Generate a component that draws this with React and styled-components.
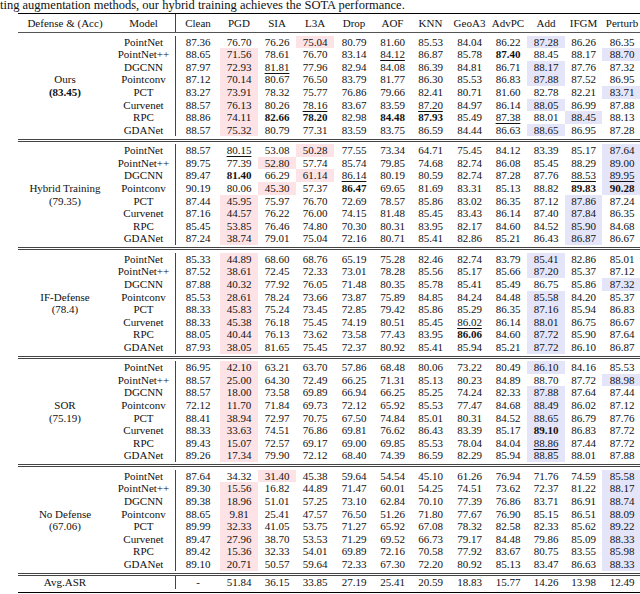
import React from 'react';
import styled, { createGlobalStyle } from 'styled-components';

const GlobalStyle = createGlobalStyle`
  html, body {
    margin: 0;
    padding: 0;
    background: #fff;
  }
  body {
    width: 640px;
    height: 594px;
    overflow: hidden;
    font-family: "Liberation Serif", "Times New Roman", serif;
    color: #111;
  }
`;

const Page = styled.div`
  width: 640px;
  height: 594px;
  overflow: hidden;
`;

const Caption = styled.p`
  margin: 0;
  height: 13.3px;
  font-size: 12.5px;
  line-height: 11.5px;
  white-space: nowrap;
`;

const Table = styled.table`
  margin-left: 18px;
  width: 624px;
  table-layout: fixed;
  border-collapse: separate;
  border-spacing: 0;
  font-size: 11px;
  border-top: 1.5px solid #000;
  border-bottom: 1.5px solid #000;
`;

const Col = styled.col`
  width: ${p => p.$w}px;
`;

const HeadCell = styled.th`
  padding: 0;
  font-weight: 400;
  text-align: center;
  border-bottom: 1px solid #555;
`;

const HeadVal = styled.div`
  line-height: 18px;
  height: 18px;
  white-space: nowrap;
  border-right: ${p => (p.$divider ? '1px solid #444' : 'none')};
`;

const Cell = styled.td`
  padding: ${p => p.$top || 0}px 0 ${p => p.$bottom || 0}px;
  text-align: center;
  vertical-align: middle;
  border-top: ${p => (p.$rule ? '3px double #444' : 'none')};
  white-space: nowrap;
`;

const TONES = {
  low: '#fde3e6',
  high: '#e5e5fa',
};

const Val = styled.div`
  height: 12.6px;
  line-height: 12.6px;
  background: ${p => TONES[p.$tone] || 'transparent'};
  font-weight: ${p => (p.$bold ? 700 : 400)};
  border-right: ${p => (p.$divider ? '1px solid #444' : 'none')};
`;

const Under = styled.span`
  text-decoration: underline;
  text-decoration-thickness: 1px;
  text-underline-offset: 1.5px;
`;

const LabelLine = styled.div`
  line-height: 12.6px;
  font-weight: ${p => (p.$bold ? 700 : 400)};
`;

const COLUMNS = ['Clean', 'PGD', 'SIA', 'L3A', 'Drop', 'AOF', 'KNN', 'GeoA3', 'AdvPC', 'Add', 'IFGM', 'Perturb'];
const WIDTHS = [94, 64, 44, 38, 38, 38, 40, 37, 39, 39, 38, 38, 37, 40];

// '*' = bold, '_' = underlined
const SECTIONS = [
  {
    label: 'Ours', acc: '(83.45)', strong: true, rows: [
      ['PointNet', '87.36 76.70 76.26 75.04 80.79 81.60 85.53 84.04 86.22 87.28 86.26 86.35'],
      ['PointNet++', '88.65 71.56 78.61 76.70 83.14 _84.12 86.87 85.78 *87.40 88.45 88.17 88.70'],
      ['DGCNN', '87.97 72.93 _81.81 77.96 82.94 84.08 86.39 84.81 86.71 88.17 87.76 87.32'],
      ['Pointconv', '87.12 70.14 80.67 76.50 83.79 81.77 86.30 85.53 86.83 87.88 87.52 86.95'],
      ['PCT', '83.27 73.91 78.32 75.77 76.86 79.66 82.41 80.71 81.60 82.78 82.21 83.71'],
      ['Curvenet', '88.57 76.13 80.26 _78.16 83.67 83.59 _87.20 84.97 86.14 88.05 86.99 87.88'],
      ['RPC', '88.86 74.11 *82.66 *78.20 82.98 *84.48 *87.93 85.49 _87.38 88.01 88.45 88.13'],
      ['GDANet', '88.57 75.32 80.79 77.31 83.59 83.75 86.59 84.44 86.63 88.65 86.95 87.28'],
    ],
  },
  {
    label: 'Hybrid Training', acc: '(79.35)', rows: [
      ['PointNet', '88.57 _80.15 53.08 50.28 77.55 73.34 64.71 75.45 84.12 83.39 85.17 87.64'],
      ['PointNet++', '89.75 77.39 52.80 57.74 85.74 79.85 74.68 82.74 86.08 85.45 88.29 89.00'],
      ['DGCNN', '89.47 *81.40 66.29 61.14 _86.14 80.19 80.59 82.74 87.28 87.76 _88.53 _89.95'],
      ['Pointconv', '90.19 80.06 45.30 57.37 *86.47 69.65 81.69 83.31 85.13 88.82 *89.83 *90.28'],
      ['PCT', '87.44 45.95 75.97 76.70 72.69 78.57 85.86 83.02 86.35 87.12 87.86 87.24'],
      ['Curvenet', '87.16 44.57 76.22 76.00 74.15 81.48 85.45 83.43 86.14 87.40 87.84 86.35'],
      ['RPC', '85.45 53.85 76.46 74.80 70.30 80.31 83.95 82.17 84.60 84.52 85.90 84.68'],
      ['GDANet', '87.24 38.74 79.01 75.04 72.16 80.71 85.41 82.86 85.21 86.43 86.87 86.67'],
    ],
  },
  {
    label: 'IF-Defense', acc: '(78.4)', rows: [
      ['PointNet', '85.33 44.89 68.60 68.76 65.19 75.28 82.46 82.74 83.79 85.41 82.86 85.01'],
      ['PointNet++', '87.52 38.61 72.45 72.33 73.01 78.28 85.56 85.17 85.66 87.20 85.37 87.12'],
      ['DGCNN', '87.88 40.32 77.92 76.05 71.48 80.35 85.78 85.41 85.49 86.75 85.86 87.32'],
      ['Pointconv', '85.53 28.61 78.24 73.66 73.87 75.89 84.85 84.24 84.48 85.58 84.20 85.37'],
      ['PCT', '88.33 45.83 75.24 73.45 72.85 79.42 85.86 85.29 86.35 87.16 85.94 86.83'],
      ['Curvenet', '88.33 45.38 76.18 75.45 74.19 80.51 85.45 _86.02 86.14 88.01 86.75 86.67'],
      ['RPC', '88.05 40.44 76.13 73.62 73.58 77.43 83.95 *86.06 84.60 87.72 85.90 87.64'],
      ['GDANet', '87.93 38.05 81.65 75.45 72.37 80.92 85.41 85.94 85.21 87.72 86.10 86.87'],
    ],
  },
  {
    label: 'SOR', acc: '(75.19)', rows: [
      ['PointNet', '86.95 42.10 63.21 63.70 57.86 68.48 80.06 73.22 80.49 86.10 84.16 85.53'],
      ['PointNet++', '88.57 25.00 64.30 72.49 66.25 71.31 85.13 80.23 84.89 88.70 87.72 88.98'],
      ['DGCNN', '88.57 18.00 73.58 69.89 66.94 66.25 85.25 74.24 82.33 87.88 87.64 87.44'],
      ['Pointconv', '72.12 11.70 71.84 69.73 72.12 65.92 85.53 77.47 84.68 88.49 86.02 87.12'],
      ['PCT', '88.41 38.94 72.97 70.75 67.50 74.84 85.01 80.31 84.52 88.65 86.79 87.76'],
      ['Curvenet', '88.33 33.63 74.51 76.86 69.81 76.62 86.43 83.39 85.17 *89.10 86.83 87.72'],
      ['RPC', '89.43 15.07 72.57 69.17 69.00 69.85 85.53 78.04 84.04 _88.86 87.44 87.72'],
      ['GDANet', '89.26 17.34 79.90 72.12 68.40 74.39 86.59 82.29 85.94 88.85 88.01 87.88'],
    ],
  },
  {
    label: 'No Defense', acc: '(67.06)', rows: [
      ['PointNet', '87.64 34.32 31.40 45.38 59.64 54.54 45.10 61.26 76.94 71.76 74.59 85.58'],
      ['PointNet++', '89.30 15.56 16.82 44.89 71.47 60.01 54.25 74.51 73.62 72.37 81.22 88.17'],
      ['DGCNN', '89.38 18.96 51.01 57.25 73.10 62.84 70.10 77.39 76.86 83.71 86.91 88.74'],
      ['Pointconv', '88.65 9.81 25.41 47.57 76.50 51.26 71.80 77.67 76.90 85.15 86.51 88.09'],
      ['PCT', '89.99 32.33 41.05 53.75 71.27 65.92 67.08 78.32 82.58 82.33 85.62 89.22'],
      ['Curvenet', '89.47 27.96 38.70 53.53 71.29 69.52 66.73 79.17 84.48 79.86 85.09 88.33'],
      ['RPC', '89.42 15.36 32.33 54.01 69.89 72.16 70.58 77.92 83.67 80.75 83.55 85.98'],
      ['GDANet', '89.10 20.71 50.57 59.64 72.33 67.30 72.20 80.92 85.13 83.47 86.63 88.33'],
    ],
  },
];

const AVG = ['-', '51.84', '36.15', '33.85', '27.19', '25.41', '20.59', '18.83', '15.77', '14.26', '13.98', '12.49'];

const PAD = 2.4;

function parseRow(str) {
  const cells = str.split(' ').map(raw => {
    const bold = raw.startsWith('*');
    const under = raw.startsWith('_');
    const text = raw.replace(/^[*_]/, '');
    return { text, bold, under, num: parseFloat(text) };
  });
  // lowest and highest robust accuracy among the attacks (Clean excluded)
  let lo = 1;
  let hi = 1;
  for (let i = 1; i < cells.length; i++) {
    if (cells[i].num < cells[lo].num) lo = i;
    if (cells[i].num > cells[hi].num) hi = i;
  }
  cells[lo].tone = 'low';
  cells[hi].tone = 'high';
  return cells;
}

function Section({ section, index }) {
  const rule = index > 0;
  const n = section.rows.length;
  return (
    <tbody>
      {section.rows.map(([model, values], r) => {
        const top = r === 0 ? PAD : 0;
        const bottom = r === n - 1 ? PAD : 0;
        const ruled = rule && r === 0;
        return (
          <tr key={model}>
            {r === 0 && (
              <Cell rowSpan={n} $rule={ruled}>
                <LabelLine>{section.label}</LabelLine>
                <LabelLine $bold={section.strong}>{section.acc}</LabelLine>
              </Cell>
            )}
            <Cell $top={top} $bottom={bottom} $rule={ruled}>
              <Val $divider>{model}</Val>
            </Cell>
            {parseRow(values).map((c, i) => (
              <Cell key={i} $top={top} $bottom={bottom} $rule={ruled}>
                <Val $tone={c.tone} $bold={c.bold}>
                  {c.under ? <Under>{c.text}</Under> : c.text}
                </Val>
              </Cell>
            ))}
          </tr>
        );
      })}
    </tbody>
  );
}

export default function App() {
  return (
    <Page>
      <GlobalStyle />
      <Caption>ting augmentation methods, our hybrid training achieves the SOTA performance.</Caption>
      <Table>
        <colgroup>
          {WIDTHS.map((w, i) => <Col key={i} $w={w} />)}
        </colgroup>
        <thead>
          <tr>
            <HeadCell><HeadVal>Defense &amp; (Acc)</HeadVal></HeadCell>
            <HeadCell><HeadVal $divider>Model</HeadVal></HeadCell>
            {COLUMNS.map(c => (
              <HeadCell key={c}><HeadVal>{c}</HeadVal></HeadCell>
            ))}
          </tr>
        </thead>
        {SECTIONS.map((s, i) => <Section key={s.label} section={s} index={i} />)}
        <tbody>
          <tr>
            <Cell $rule $bottom={3}><Val>Avg.ASR</Val></Cell>
            <Cell $rule $bottom={3}><Val $divider /></Cell>
            {AVG.map((v, i) => (
              <Cell key={i} $rule $bottom={3}><Val>{v}</Val></Cell>
            ))}
          </tr>
        </tbody>
      </Table>
    </Page>
  );
}
